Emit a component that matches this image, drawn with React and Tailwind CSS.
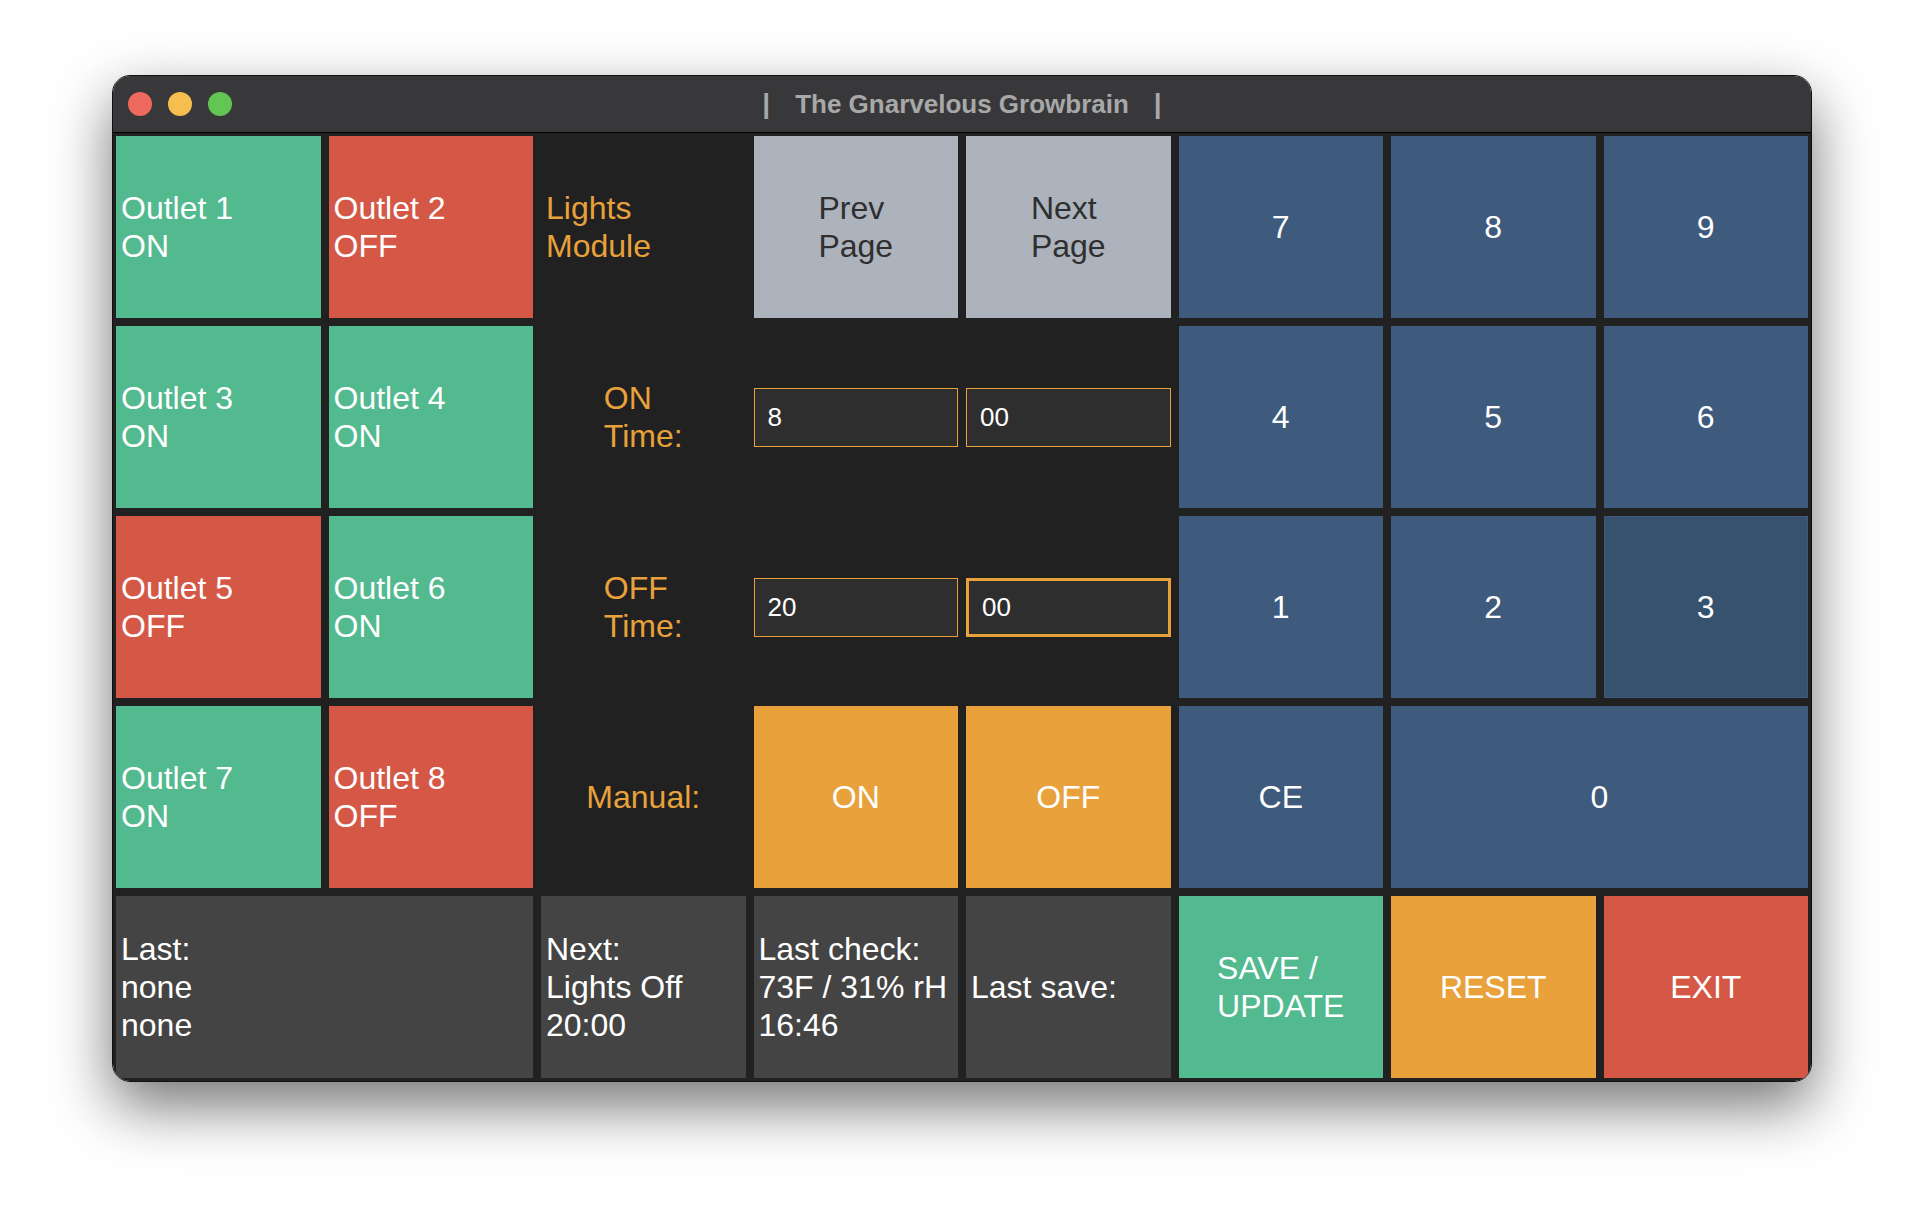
import React from "react";

const GREEN = "bg-[#53b98f]";
const RED = "bg-[#d55847]";
const ORANGE = "bg-[#e8a13b]";
const BLUE = "bg-[#3e5a7c]";

function Outlet({ n, on }) {
  return (
    <div className={`${on ? GREEN : RED} flex items-center pl-[5px] text-white`}>
      <div>
        <div>Outlet {n}</div>
        <div>{on ? "ON" : "OFF"}</div>
      </div>
    </div>
  );
}

function Label({ lines }) {
  return (
    <div className="flex items-center justify-center text-[#e8a13b]">
      <div className="text-left">
        {lines.map((l) => (
          <div key={l}>{l}</div>
        ))}
      </div>
    </div>
  );
}

function TimeInput({ value, focused }) {
  return (
    <div className="flex items-center">
      <div
        className={`w-full h-[59px] bg-[#2e2e2e] flex items-center pl-[13px] text-white text-[26px] leading-none border-[#e8a13b] ${
          focused ? "border-[3px]" : "border"
        }`}
      >
        {value}
      </div>
    </div>
  );
}

function Key({ children, className = "" }) {
  return (
    <div className={`${BLUE} flex items-center justify-center text-white ${className}`}>
      {children}
    </div>
  );
}

function Status({ lines, className = "" }) {
  return (
    <div className={`bg-[#444444] flex items-center pl-[5px] text-white ${className}`}>
      <div>
        {lines.map((l, i) => (
          <div key={i}>{l}</div>
        ))}
      </div>
    </div>
  );
}

export default function App() {
  return (
    <div className="min-h-[1230px] w-full bg-white pt-[75px] pl-[112px] font-['Liberation_Sans','Helvetica',sans-serif]">
      <div className="w-[1700px] rounded-[18px] overflow-hidden border border-[#111] shadow-[0_24px_60px_rgba(0,0,0,0.55)] flex flex-col">
        <div className="h-[57px] bg-[#38383a] border-b border-black grid grid-cols-[1fr_auto_1fr] items-center">
          <div className="flex items-center gap-[16px] pl-[15px]">
            <div className="w-[24px] h-[24px] rounded-full bg-[#ee6a5f]" />
            <div className="w-[24px] h-[24px] rounded-full bg-[#f5be4f]" />
            <div className="w-[24px] h-[24px] rounded-full bg-[#62c554]" />
          </div>
          <div className="flex items-center gap-[25px] text-[#a8a8a8] text-[26px] font-bold leading-none -mt-[1px]">
            <span className="text-[28px]">|</span>
            <span>The Gnarvelous Growbrain</span>
            <span className="text-[28px]">|</span>
          </div>
          <div />
        </div>
        <div className="bg-[#212121] p-[3px] grid grid-cols-8 auto-rows-[182px] gap-[8px] text-[32px] leading-[38px]">
          {/* Row 1 */}
          <Outlet n={1} on />
          <Outlet n={2} on={false} />
          <div className="flex items-center pl-[5px] text-[#e8a13b]">
            <div>
              <div>Lights</div>
              <div>Module</div>
            </div>
          </div>
          <div className="bg-[#adb3bc] flex items-center justify-center text-[#2f2f2f]">
            <div className="text-left">
              <div>Prev</div>
              <div>Page</div>
            </div>
          </div>
          <div className="bg-[#adb3bc] flex items-center justify-center text-[#2f2f2f]">
            <div className="text-left">
              <div>Next</div>
              <div>Page</div>
            </div>
          </div>
          <Key>7</Key>
          <Key>8</Key>
          <Key>9</Key>

          {/* Row 2 */}
          <Outlet n={3} on />
          <Outlet n={4} on />
          <Label lines={["ON", "Time:"]} />
          <TimeInput value="8" />
          <TimeInput value="00" />
          <Key>4</Key>
          <Key>5</Key>
          <Key>6</Key>

          {/* Row 3 */}
          <Outlet n={5} on={false} />
          <Outlet n={6} on />
          <Label lines={["OFF", "Time:"]} />
          <TimeInput value="20" />
          <TimeInput value="00" focused />
          <Key>1</Key>
          <Key>2</Key>
          <div className="bg-[#37526f] border border-[#41597a] flex items-center justify-center text-white">3</div>

          {/* Row 4 */}
          <Outlet n={7} on />
          <Outlet n={8} on={false} />
          <div className="flex items-center justify-center text-[#e8a13b]">Manual:</div>
          <div className={`${ORANGE} flex items-center justify-center text-white`}>ON</div>
          <div className={`${ORANGE} flex items-center justify-center text-white`}>OFF</div>
          <Key>CE</Key>
          <Key className="col-span-2">0</Key>

          {/* Row 5 */}
          <Status className="col-span-2" lines={["Last:", "none", "none"]} />
          <Status lines={["Next:", "Lights Off", "20:00"]} />
          <Status lines={["Last check:", "73F / 31% rH", "16:46"]} />
          <Status lines={["Last save:"]} />
          <div className={`${GREEN} flex items-center justify-center text-white`}>
            <div className="text-left">
              <div>SAVE /</div>
              <div>UPDATE</div>
            </div>
          </div>
          <div className={`${ORANGE} flex items-center justify-center text-white`}>RESET</div>
          <div className={`${RED} flex items-center justify-center text-white`}>EXIT</div>
        </div>
      </div>
    </div>
  );
}
